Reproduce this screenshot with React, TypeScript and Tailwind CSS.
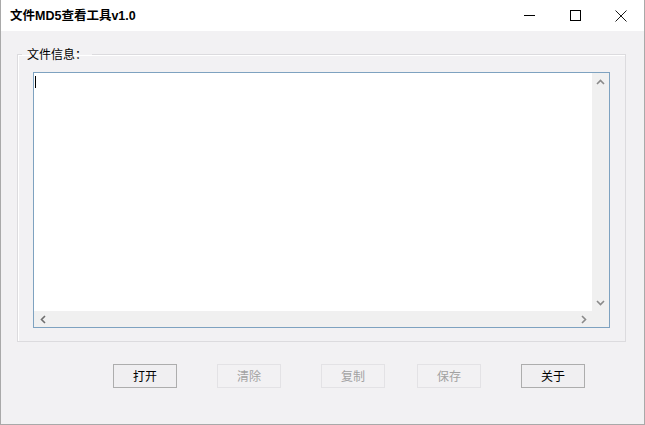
const font = { fontFamily: '"Microsoft YaHei", "Noto Sans CJK SC", "Liberation Sans", sans-serif' };
const titleFont = { fontFamily: '"Liberation Sans", "Noto Sans CJK SC", sans-serif' };

const Btn = ({ label, disabled, className }: { label: string; disabled?: boolean; className?: string }) => (
  <button
    className={`w-[64px] h-[24px] text-[12px] leading-none flex items-center justify-center border ${
      disabled ? 'border-[#e3e2e5] bg-[#f2f1f3] text-[#a2a2a2]' : 'border-[#adadad] bg-[#f0eff1] text-black'
    } ${className ?? ''}`}
  >
    {label}
  </button>
);

export default function App() {
  return (
    <div className="w-[645px] h-[425px] flex flex-col border-x border-b border-[#a9a9a9] bg-[#f2f1f3]" style={font}>
      {/* title bar */}
      <div className="h-[31px] bg-white flex items-center relative">
        <span className="ml-[9px] mt-[1px] text-[12.5px] font-bold text-black" style={titleFont}>文件MD5查看工具v1.0</span>
        <div className="ml-auto flex items-center h-full">
          <div className="w-[46px] h-full flex items-center justify-center">
            <svg width="11" height="11" viewBox="0 0 11 11">
              <line x1="0" y1="5.5" x2="11" y2="5.5" stroke="#000" strokeWidth="1" />
            </svg>
          </div>
          <div className="w-[46px] h-full flex items-center justify-center">
            <svg width="11" height="11" viewBox="0 0 11 11">
              <rect x="0.5" y="0.5" width="10" height="10" fill="none" stroke="#000" strokeWidth="1" />
            </svg>
          </div>
          <div className="w-[46px] h-full flex items-center justify-center">
            <svg width="12" height="12" viewBox="0 0 12 12">
              <path d="M0.5 0.5 L11.5 11.5 M11.5 0.5 L0.5 11.5" stroke="#000" strokeWidth="0.9" />
            </svg>
          </div>
        </div>
      </div>

      {/* body */}
      <div className="flex-1 flex flex-col">
        <fieldset className="ml-[16px] mt-[15px] w-[608px] h-[296px] border border-[#dcdbde] shadow-[inset_1px_1px_0_#ffffff] px-[15px] pt-[10px]">
          <legend className="-ml-[11px] px-[5px] text-[12px] text-black leading-[16px]">文件信息：</legend>
          <div className="w-[577px] h-[256px] border border-[#7ea2c0] bg-white flex flex-col">
            <div className="flex-1 flex">
              <div className="flex-1 relative">
                <div className="absolute left-[1px] top-[3px] w-px h-[12px] bg-black" />
              </div>
              <div className="w-[17px] bg-[#f0f0f0] flex flex-col justify-between">
                <div className="h-[17px] flex items-center justify-center">
                  <svg width="9" height="6" viewBox="0 0 9 6">
                    <path d="M1 5 L4.5 1.5 L8 5" fill="none" stroke="#8a8a8a" strokeWidth="1.6" />
                  </svg>
                </div>
                <div className="h-[17px] flex items-center justify-center">
                  <svg width="9" height="6" viewBox="0 0 9 6">
                    <path d="M1 1 L4.5 4.5 L8 1" fill="none" stroke="#8a8a8a" strokeWidth="1.6" />
                  </svg>
                </div>
              </div>
            </div>
            <div className="h-[16px] flex">
              <div className="flex-1 bg-[#f0f0f0] flex items-center justify-between">
                <div className="w-[17px] h-full flex items-center justify-center">
                  <svg width="6" height="9" viewBox="0 0 6 9">
                    <path d="M5 1 L1.5 4.5 L5 8" fill="none" stroke="#6e6e6e" strokeWidth="1.6" />
                  </svg>
                </div>
                <div className="w-[17px] h-full flex items-center justify-center">
                  <svg width="6" height="9" viewBox="0 0 6 9">
                    <path d="M1 1 L4.5 4.5 L1 8" fill="none" stroke="#8a8a8a" strokeWidth="1.6" />
                  </svg>
                </div>
              </div>
              <div className="w-[17px] bg-[#f0f0f0]" />
            </div>
          </div>
        </fieldset>

        <div className="flex mt-[22px] ml-[112px]">
          <Btn label="打开" />
          <Btn label="清除" disabled className="ml-[40px]" />
          <Btn label="复制" disabled className="ml-[40px]" />
          <Btn label="保存" disabled className="ml-[32px]" />
          <Btn label="关于" className="ml-[40px]" />
        </div>
      </div>
    </div>
  );
}
